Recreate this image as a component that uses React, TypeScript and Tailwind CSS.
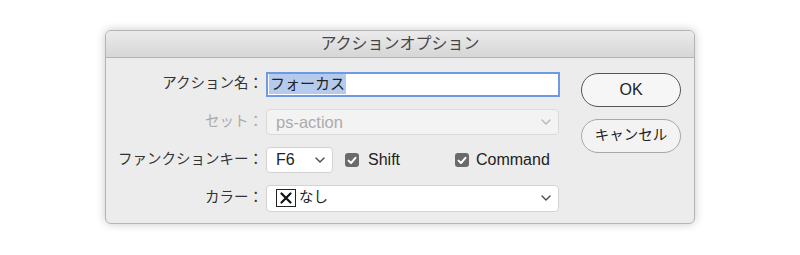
import React from "react";

const font = { fontFamily: '"Liberation Sans", "Noto Sans CJK JP", sans-serif' };

function Chevron({ disabled = false }: { disabled?: boolean }) {
  return (
    <svg width="10" height="6" viewBox="0 0 10 6" className="shrink-0">
      <path
        d="M1 1 L5 5 L9 1"
        fill="none"
        stroke={disabled ? "#b8b8b8" : "#4a4a4a"}
        strokeWidth="1.4"
        strokeLinecap="round"
        strokeLinejoin="round"
      />
    </svg>
  );
}

function Check() {
  return (
    <span className="w-[14px] h-[14px] rounded-[3px] bg-[#6a6a6a] flex items-center justify-center">
      <svg width="10" height="9" viewBox="0 0 10 9">
        <path d="M1.5 4.6 L4 7 L8.5 1.8" fill="none" stroke="#fff" strokeWidth="2" strokeLinecap="round" strokeLinejoin="round" />
      </svg>
    </span>
  );
}

function Row({ label, disabled, children }: { label: string; disabled?: boolean; children: React.ReactNode }) {
  return (
    <div className="h-[38px] flex items-center">
      <div className={"w-[160px] text-right pr-[3px] text-[14.5px] " + (disabled ? "text-[#a9a9a9]" : "text-[#333]")}>
        {label}
      </div>
      {children}
    </div>
  );
}

export default function App() {
  return (
    <div className="w-[800px] h-[255px] bg-white pt-[30px] pl-[105px]" style={font}>
      <div className="w-[590px] h-[194px] rounded-[6px] border border-[#b4b4b4] bg-[#ececec] shadow-[0_0_10px_rgba(0,0,0,0.22)] overflow-hidden flex flex-col">
        <div className="h-[27px] shrink-0 bg-gradient-to-b from-[#ebebeb] to-[#d6d6d6] border-b border-[#b5b5b5] flex items-center justify-center text-[16px] text-[#454545]">
          アクションオプション
        </div>
        <div className="flex flex-1">
          <div className="pt-[7px] w-[458px]">
            <Row label="アクション名：">
              <div className="w-[294px] h-[25px] bg-white border-2 border-[#6e9ae3] flex items-center pl-[1px] text-[15px] text-[#222]">
                <span className="bg-[#b5cbee] px-[1px] leading-[20px]">フォーカス</span>
              </div>
            </Row>
            <Row label="セット：" disabled>
              <div className="w-[293px] h-[26px] bg-[#f3f3f3] border border-[#dadada] rounded-[4px] flex items-center justify-between pl-[9px] pr-[7px] text-[16.5px] text-[#ababab]">
                <span>ps-action</span>
                <Chevron disabled />
              </div>
            </Row>
            <Row label="ファンクションキー：">
              <div className="w-[67px] h-[26px] bg-white border border-[#d3d3d3] rounded-[4px] flex items-center justify-between pl-[9px] pr-[7px] text-[16px] text-[#222]">
                <span>F6</span>
                <Chevron />
              </div>
              <div className="ml-[12px] flex items-center gap-[9px] text-[16px] text-[#222] w-[110px]">
                <Check />
                <span>Shift</span>
              </div>
              <div className="flex items-center gap-[7px] text-[16px] text-[#222]">
                <Check />
                <span>Command</span>
              </div>
            </Row>
            <Row label="カラー：">
              <div className="w-[293px] h-[27px] bg-white border border-[#d3d3d3] rounded-[4px] flex items-center justify-between pl-[9px] pr-[7px] text-[14.5px] text-[#222]">
                <div className="flex items-center gap-[3px]">
                  <span className="w-[20px] h-[18px] border-[1.5px] border-[#222] flex items-center justify-center">
                    <svg width="12" height="12" viewBox="0 0 12 12">
                      <path d="M1.5 1.5 L10.5 10.5 M10.5 1.5 L1.5 10.5" stroke="#111" strokeWidth="2.2" strokeLinecap="round" />
                    </svg>
                  </span>
                  <span>なし</span>
                </div>
                <Chevron />
              </div>
            </Row>
          </div>
          <div className="flex-1 pt-[15px] pl-[17px] flex flex-col gap-[12px]">
            <button className="w-[100px] h-[34px] rounded-full border-[1.5px] border-[#555] bg-[#f6f6f6] text-[16px] text-[#222]">
              OK
            </button>
            <button className="w-[100px] h-[34px] rounded-full border border-[#a8a8a8] bg-[#f3f3f3] text-[14.5px] text-[#222]">
              キャンセル
            </button>
          </div>
        </div>
      </div>
    </div>
  );
}
